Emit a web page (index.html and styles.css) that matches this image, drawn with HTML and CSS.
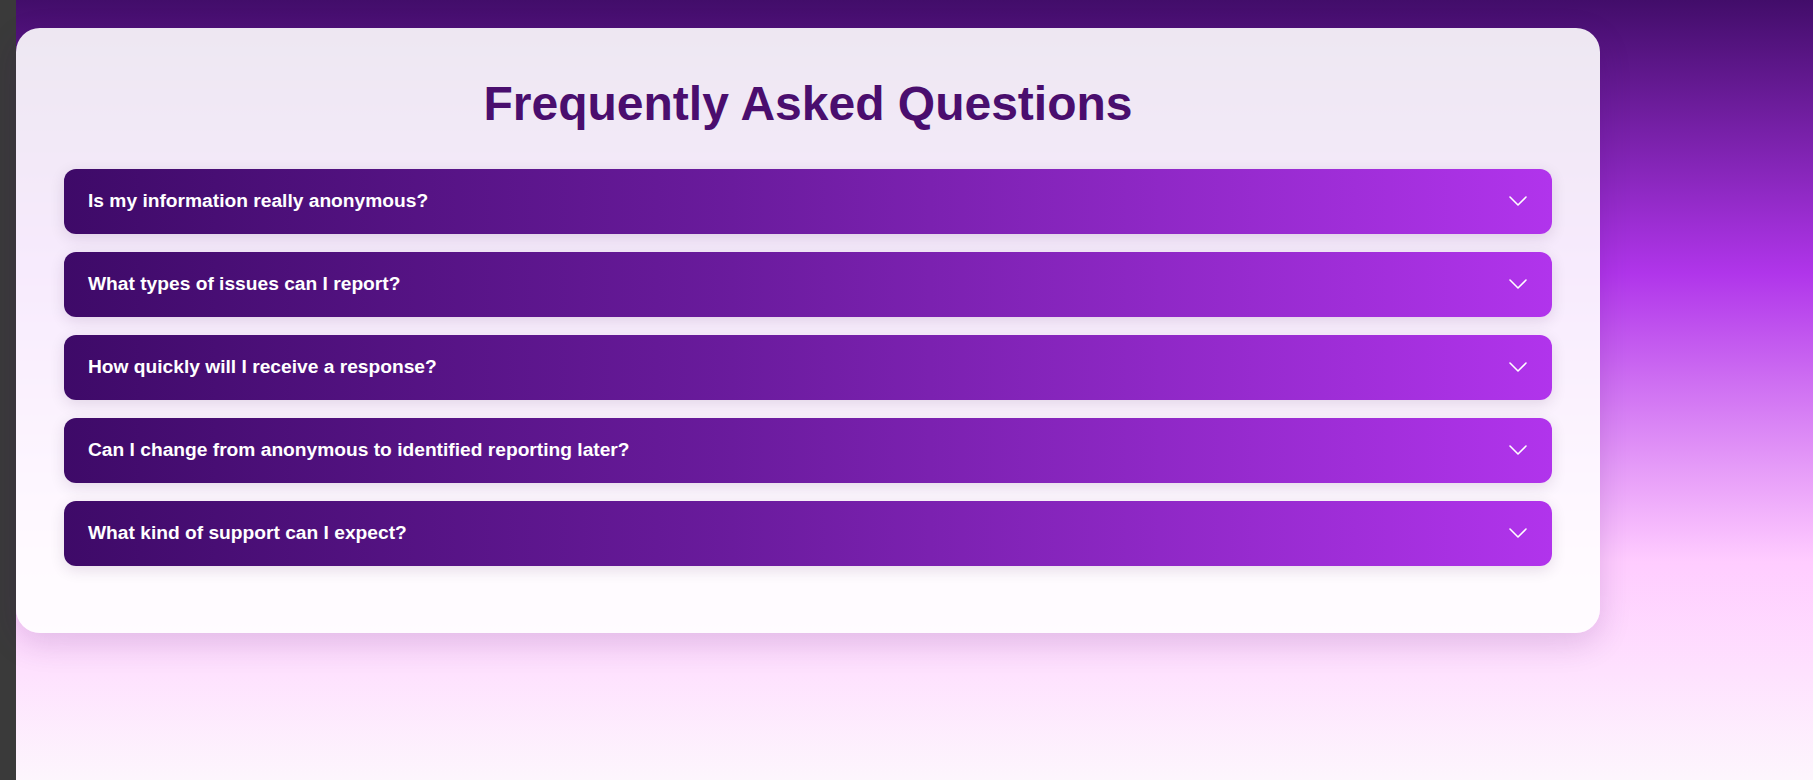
FILE: index.html
```html
<!DOCTYPE html>
<html lang="en">
<head>
<meta charset="utf-8">
<title>FAQ</title>
<link rel="stylesheet" href="styles.css">
</head>
<body>
<div class="app">
  <aside class="edge"></aside>
  <main class="page">
    <section class="faq-card">
      <h2 class="faq-title">Frequently Asked Questions</h2>
      <div class="faq-list">
        <div class="faq-item">
          <span class="faq-q">Is my information really anonymous?</span>
          <svg class="chev" width="18" height="10" viewBox="0 0 18 10"><polyline points="1,1 9,9 17,1" fill="none" stroke="#fff" stroke-width="1.6" stroke-linecap="round" stroke-linejoin="round"/></svg>
        </div>
        <div class="faq-item">
          <span class="faq-q">What types of issues can I report?</span>
          <svg class="chev" width="18" height="10" viewBox="0 0 18 10"><polyline points="1,1 9,9 17,1" fill="none" stroke="#fff" stroke-width="1.6" stroke-linecap="round" stroke-linejoin="round"/></svg>
        </div>
        <div class="faq-item">
          <span class="faq-q">How quickly will I receive a response?</span>
          <svg class="chev" width="18" height="10" viewBox="0 0 18 10"><polyline points="1,1 9,9 17,1" fill="none" stroke="#fff" stroke-width="1.6" stroke-linecap="round" stroke-linejoin="round"/></svg>
        </div>
        <div class="faq-item">
          <span class="faq-q">Can I change from anonymous to identified reporting later?</span>
          <svg class="chev" width="18" height="10" viewBox="0 0 18 10"><polyline points="1,1 9,9 17,1" fill="none" stroke="#fff" stroke-width="1.6" stroke-linecap="round" stroke-linejoin="round"/></svg>
        </div>
        <div class="faq-item">
          <span class="faq-q">What kind of support can I expect?</span>
          <svg class="chev" width="18" height="10" viewBox="0 0 18 10"><polyline points="1,1 9,9 17,1" fill="none" stroke="#fff" stroke-width="1.6" stroke-linecap="round" stroke-linejoin="round"/></svg>
        </div>
      </div>
    </section>
  </main>
</div>
</body>
</html>
```
FILE: styles.css
```css
* { box-sizing: border-box; }
html, body { margin: 0; height: 100%; }
body {
  font-family: "Liberation Sans", Arial, sans-serif;
  overflow: hidden;
}
.app {
  display: flex;
  height: 780px;
}
.edge {
  width: 16px;
  flex: 0 0 16px;
  background: #3a3a3a;
}
.page {
  flex: 1;
  padding-top: 28px;
  background: linear-gradient(180deg, #420d6a 0%, #b035ea 35%, #ffccff 72%, #fdf6fd 100%);
}
.faq-card {
  width: 1584px;
  padding: 48px 48px 67px;
  border-radius: 24px;
  background: rgba(255, 255, 255, 0.9);
  box-shadow: 0 10px 32px rgba(70, 12, 100, 0.16);
}
.faq-title {
  margin: 0 0 38px;
  text-align: center;
  font-size: 48px;
  font-weight: 700;
  color: #4a0e6e;
}
.faq-list {
  display: flex;
  flex-direction: column;
  gap: 18px;
}
.faq-item {
  display: flex;
  align-items: center;
  justify-content: space-between;
  height: 65px;
  padding: 0 25px 2px 24px;
  border-radius: 12px;
  background: linear-gradient(90deg, #3e0a68 0%, #6a1b9d 45%, #b134ec 100%);
  box-shadow: 0 4px 15px rgba(40, 0, 60, 0.12);
  color: #fff;
}
.faq-q {
  font-size: 19.2px;
  font-weight: 700;
}
.chev { display: block; }
```
